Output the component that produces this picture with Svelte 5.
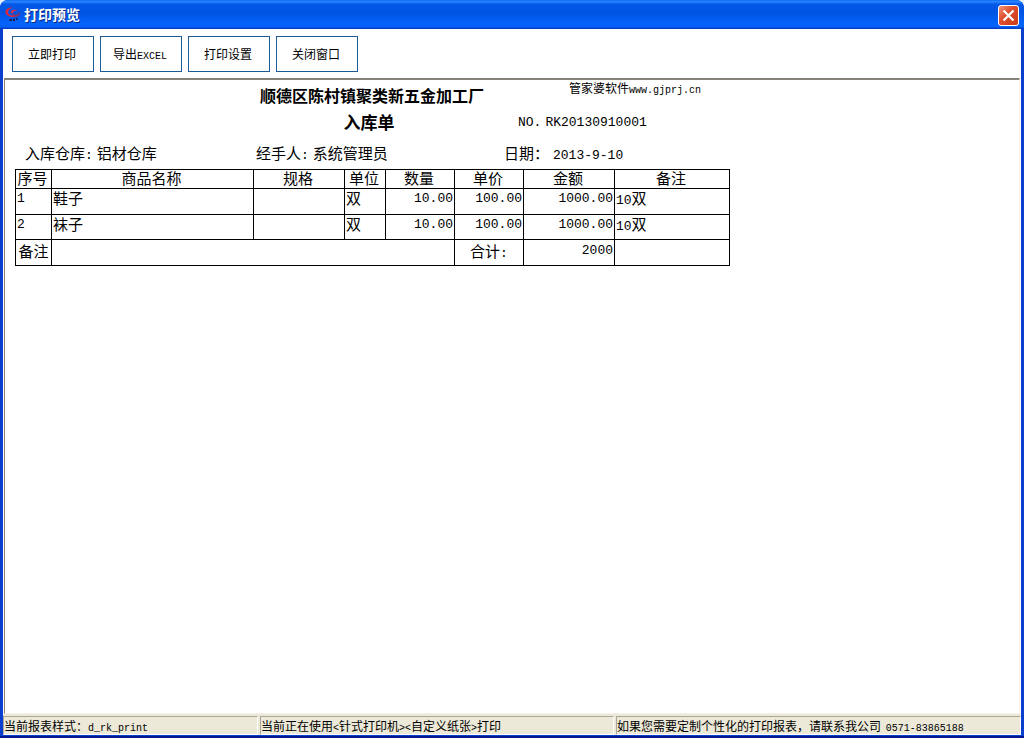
<script lang="ts">
	const actions = ["立即打印", "导出EXCEL", "打印设置", "关闭窗口"];

	const columns = [
		{ key: "no", label: "序号" },
		{ key: "name", label: "商品名称" },
		{ key: "spec", label: "规格" },
		{ key: "unit", label: "单位" },
		{ key: "qty", label: "数量" },
		{ key: "price", label: "单价" },
		{ key: "amount", label: "金额" },
		{ key: "remark", label: "备注" },
	];

	let rows = $state([
		{ name: "鞋子", spec: "", unit: "双", qty: 10, price: 100, count: 10 },
		{ name: "袜子", spec: "", unit: "双", qty: 10, price: 100, count: 10 },
	]);

	let total = $derived(rows.reduce((sum, row) => sum + row.qty * row.price, 0));
</script>

<div class="window">
	<header class="titlebar">
		<svg class="app-icon" viewBox="0 0 16 16" aria-hidden="true">
			<path d="M8 0.500C3 0 0 2.500 0.500 5.500C1 8.500 5 10.500 10 10L11 8.500C6 9 3 7.500 3 5.200C3 3 5 1.500 8 0.500Z" fill="#e0283c" />
			<path d="M5.500 6C6 3 9 1.800 13 3.500C10 3.200 8 4.200 8 6.500Z" fill="#d83048" />
			<path d="M7 6.500C10 8.500 13.500 8 14 4.500C16.500 8 13 11 8 9Z" fill="#8c3468" />
			<path d="M4.500 12h2.500v2h-2.500zM8 11.500h2v2.500h-2zM11 11h1.500v2h-1.500z" fill="#1c2050" />
		</svg>
		<h1>打印预览</h1>
		<button class="close-btn" aria-label="关闭">
			<svg viewBox="0 0 19 19" aria-hidden="true">
				<path d="M4.500 4.500L14.500 14.500M14.500 4.500L4.500 14.500" stroke="#fff" stroke-width="2.200" />
			</svg>
		</button>
	</header>

	<div class="client">
		<nav class="toolbar">
			{#each actions as action}
				<button class="tool-btn">
					{#if action.endsWith("EXCEL")}
						{action.replace("EXCEL", "")}<span class="latin-sm">EXCEL</span>
					{:else}
						{action}
					{/if}
				</button>
			{/each}
		</nav>

		<main class="preview">
			<section class="sheet">
				<div class="heading company-row">
					<h2>顺德区陈村镇聚类新五金加工厂</h2>
					<p class="vendor">管家婆软件<span class="latin-sm">www.gjprj.cn</span></p>
				</div>
				<div class="heading">
					<h3>入库单</h3>
					<p class="field order-no">
						<span class="latin">NO.</span><span class="latin">RK20130910001</span>
					</p>
				</div>
				<div class="heading info-row">
					<p class="field warehouse"><span>入库仓库<span class="latin">:</span></span><span>铝材仓库</span></p>
					<p class="field"><span>经手人<span class="latin">:</span></span><span>系统管理员</span></p>
					<p class="field date"><span>日期：</span><span class="latin">2013-9-10</span></p>
				</div>

				<table>
					<colgroup>
						{#each columns as column}
							<col class={column.key} />
						{/each}
					</colgroup>
					<thead>
						<tr>
							{#each columns as column}
								<th>{column.label}</th>
							{/each}
						</tr>
					</thead>
					<tbody>
						{#each rows as row, i}
							<tr>
								<td class="latin">{i + 1}</td>
								<td>{row.name}</td>
								<td>{row.spec}</td>
								<td>{row.unit}</td>
								<td class="latin number">{row.qty.toFixed(2)}</td>
								<td class="latin number">{row.price.toFixed(2)}</td>
								<td class="latin number">{(row.qty * row.price).toFixed(2)}</td>
								<td><span class="latin">{row.count}</span>{row.unit}</td>
							</tr>
						{/each}
					</tbody>
					<tfoot>
						<tr>
							<td class="center">备注</td>
							<td colspan="4"></td>
							<td class="center">合计<span class="latin">:</span></td>
							<td class="latin number">{total}</td>
							<td></td>
						</tr>
					</tfoot>
				</table>
			</section>
		</main>

		<footer class="statusbar">
			<div class="panel style-panel">当前报表样式：<span class="latin-sm">d_rk_print</span></div>
			<div class="panel printer-panel">
				当前正在使用<span class="latin-sm">&lt;</span>针式打印机<span class="latin-sm">&gt;&lt;</span>自定义纸张<span class="latin-sm">&gt;</span>打印
			</div>
			<div class="panel contact-panel">如果您需要定制个性化的打印报表，请联系我公司 <span class="latin-sm phone">0571-83865188</span></div>
		</footer>
	</div>
</div>

<style>
	:global(body) {
		margin: 0;
		background: #e8f0f8;
	}

	.window {
		display: flex;
		flex-direction: column;
		box-sizing: border-box;
		height: 100vh;
		border-bottom: 2px solid #00188c;
		border-radius: 8px 8px 0 0;
		overflow: hidden;
		background: #0a3fd0;
		font-family: "Noto Sans CJK SC", sans-serif;
		font-size: 12px;
		color: #000;
	}

	h1,
	h2,
	h3,
	p {
		margin: 0;
	}

	.latin,
	.latin-sm {
		font-family: "Liberation Mono", monospace;
	}

	.latin {
		font-size: 13px;
	}

	.latin-sm {
		font-size: 10px;
	}

	.titlebar {
		display: flex;
		align-items: center;
		box-sizing: border-box;
		height: 29px;
		flex-shrink: 0;
		padding: 1px 5px 0;
		background: linear-gradient(180deg, #0a6cf0, #2a86ff 6%, #0458e8 14%, #0054e4 45%, #0464fc 82%, #0460f8 92%, #0038b8);
	}

	.app-icon {
		width: 16px;
		height: 16px;
		margin-right: 3px;
	}

	.titlebar h1 {
		flex: 1;
		font-size: 14px;
		line-height: 20px;
		padding-bottom: 2px;
		font-weight: 700;
		color: #fff;
		text-shadow: 1px 1px #0a2a88;
	}

	.close-btn {
		width: 21px;
		height: 21px;
		padding: 0;
		border: 1px solid #fff;
		border-radius: 3px;
		background: linear-gradient(135deg, #f09878, #e05030 40%, #c83c14);
	}

	.close-btn svg {
		display: block;
		width: 19px;
		height: 19px;
	}

	.client {
		flex: 1;
		min-height: 0;
		display: flex;
		flex-direction: column;
		margin: 0 3px 1px;
		background: #fff;
	}

	.toolbar {
		display: flex;
		gap: 6px;
		padding: 7px 9px 6px;
	}

	.tool-btn {
		width: 82px;
		height: 36px;
		padding: 0 2px 2px 0;
		border: 1px solid #1c5c98;
		background: #fff;
		font-family: inherit;
		font-size: 12px;
		color: #000;
	}

	.preview {
		flex: 1;
		min-height: 0;
		overflow: auto;
		margin: 0 1px;
		border: 1px solid #f4f2e8;
		border-top: 2px solid #86837a;
		border-left-color: #86837a;
	}

	.sheet {
		width: 715px;
		padding: 2px 10px;
		font-size: 15px;
	}

	.heading {
		display: grid;
		grid-template-columns: 241px 232px 1fr;
		align-items: center;
		height: 26px;
	}

	.heading h2,
	.heading h3 {
		grid-column: 2;
		text-align: center;
		white-space: nowrap;
		font-weight: 700;
	}

	.heading h2 {
		font-size: 16px;
		line-height: 24px;
	}

	.heading h3 {
		padding-right: 6px;
		font-size: 17px;
		line-height: 24px;
	}

	.vendor {
		align-self: start;
		padding-left: 81px;
		font-size: 12px;
		line-height: 12px;
	}

	.field {
		display: flex;
		align-items: baseline;
		gap: 4px;
		line-height: 26px;
	}

	.order-no {
		padding: 2px 0 0 30px;
	}

	.info-row {
		height: 35px;
		align-items: end;
	}

	.warehouse {
		padding-left: 10px;
	}

	.date {
		padding-left: 16px;
	}

	table {
		width: 100%;
		table-layout: fixed;
		border-collapse: collapse;
	}

	col.no {
		width: 36px;
	}

	col.name {
		width: 202px;
	}

	col.spec,
	col.amount {
		width: 91px;
	}

	col.unit {
		width: 41px;
	}

	col.qty,
	col.price {
		width: 69px;
	}

	th,
	td {
		box-sizing: border-box;
		padding: 0 1px;
		border: 1px solid #000;
		line-height: 18px;
		white-space: nowrap;
	}

	th {
		height: 19px;
		padding: 0 2px 0 0;
		line-height: 16px;
		vertical-align: top;
		font-weight: 400;
	}

	td {
		height: 25px;
		vertical-align: top;
		text-align: left;
	}

	tbody tr:first-child td {
		height: 26px;
	}

	td.latin {
		line-height: 20px;
	}

	td.number {
		text-align: right;
	}

	tfoot td,
	tfoot td.latin {
		line-height: 22px;
	}

	td.center {
		padding: 0;
		text-align: center;
	}

	.statusbar {
		display: flex;
		gap: 2px;
		padding-top: 2px;
		background: #ece9d8;
	}

	.panel {
		box-sizing: border-box;
		height: 19px;
		overflow: hidden;
		border: 1px solid #fff;
		border-top-color: #aca899;
		border-left-color: #aca899;
		line-height: 17px;
		white-space: nowrap;
	}

	.style-panel {
		flex: 0 1 255px;
	}

	.printer-panel {
		flex: 0 1 354px;
	}

	.contact-panel {
		flex: 1;
	}

	.phone {
		margin-left: 2px;
	}
</style>
